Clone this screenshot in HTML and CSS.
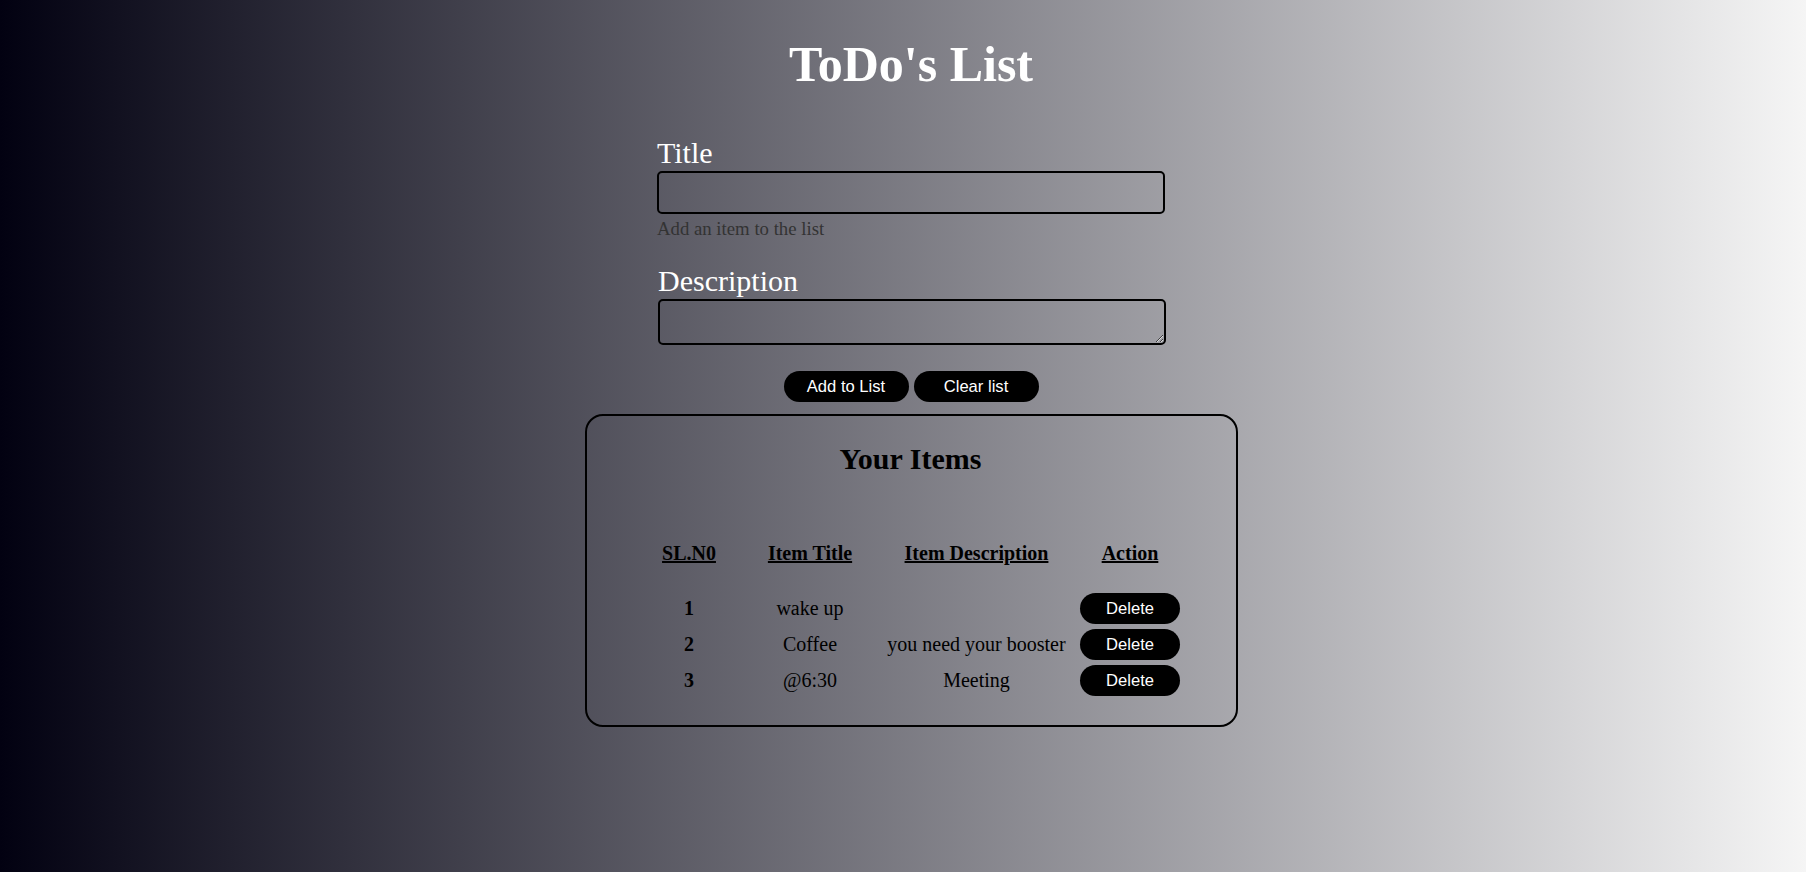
FILE: index.html
```html
<!DOCTYPE html>
<html lang="en">
<head>
<meta charset="utf-8">
<title>ToDo's List</title>
<link rel="stylesheet" href="styles.css">
</head>
<body>
<div class="page">
  <h1 class="app-title">ToDo's List</h1>
  <form class="todo-form">
    <div class="field">
      <label class="field-label" for="title">Title</label>
      <input class="field-input" id="title" type="text">
      <div class="field-help">Add an item to the list</div>
    </div>
    <div class="field field-desc">
      <label class="field-label" for="desc">Description</label>
      <textarea class="field-textarea" id="desc"></textarea>
    </div>
  </form>
  <div class="actions">
    <button class="pill-btn" type="button">Add to List</button>
    <button class="pill-btn" type="button">Clear list</button>
  </div>
  <section class="items-box">
    <h2 class="items-title">Your Items</h2>
    <table class="items-table">
      <colgroup>
        <col class="col-no">
        <col class="col-title">
        <col class="col-desc">
        <col class="col-action">
      </colgroup>
      <thead>
        <tr>
          <th>SL.N0</th>
          <th>Item Title</th>
          <th>Item Description</th>
          <th>Action</th>
        </tr>
      </thead>
      <tbody>
        <tr>
          <th class="row-no">1</th>
          <td>wake up</td>
          <td></td>
          <td><button class="del-btn" type="button">Delete</button></td>
        </tr>
        <tr>
          <th class="row-no">2</th>
          <td>Coffee</td>
          <td>you need your booster</td>
          <td><button class="del-btn" type="button">Delete</button></td>
        </tr>
        <tr>
          <th class="row-no">3</th>
          <td>@6:30</td>
          <td>Meeting</td>
          <td><button class="del-btn" type="button">Delete</button></td>
        </tr>
      </tbody>
    </table>
  </section>
</div>
</body>
</html>
```
FILE: styles.css
```css
html, body {
  margin: 0;
  padding: 0;
  height: 100%;
}

body {
  background: linear-gradient(to right, #020111, #f5f5f5);
  font-family: "Liberation Serif", "Times New Roman", serif;
  color: #000;
}

.page {
  padding: 35px 0 0 16px;
}

.app-title {
  margin: 0;
  font-size: 50px;
  line-height: 58px;
  font-weight: bold;
  color: #fff;
  text-align: center;
}

.todo-form {
  width: 508px;
  margin: 42px auto 0;
}

.field-desc {
  margin-top: 24px;
  padding-left: 1px;
}

.field-label {
  display: block;
  font-size: 30px;
  line-height: 35px;
  color: #fff;
}

.field-input,
.field-textarea {
  display: block;
  box-sizing: border-box;
  width: 508px;
  margin: 1px 0 0;
  padding: 4px 8px;
  background: transparent;
  border: 2px solid #000;
  border-radius: 5px;
  font-family: "Liberation Serif", serif;
  font-size: 18px;
  color: #000;
  outline: none;
}

.field-input {
  height: 43px;
}

.field-textarea {
  height: 46px;
  resize: both;
}

.field-help {
  margin-top: 4px;
  font-size: 18.75px;
  line-height: 21px;
  color: #333;
}

.actions {
  display: flex;
  justify-content: center;
  gap: 5px;
  margin-top: 26px;
}

.pill-btn,
.del-btn {
  box-sizing: border-box;
  height: 31px;
  padding: 1px 0 0;
  border: none;
  border-radius: 16px;
  background: #000;
  color: #fff;
  font-family: "Liberation Sans", Arial, sans-serif;
  font-size: 16.6px;
  cursor: pointer;
}

.pill-btn {
  width: 125px;
}

.del-btn {
  width: 100px;
  display: inline-block;
  vertical-align: middle;
}

.items-box {
  box-sizing: border-box;
  width: 653px;
  margin: 12px auto 0;
  padding: 26px 0 27px 4px;
  border: 2px solid #000;
  border-radius: 18px;
}

.items-title {
  margin: 0 5px 66px 0;
  font-size: 30px;
  line-height: 34px;
  font-weight: bold;
  text-align: center;
}

.items-table {
  table-layout: fixed;
  width: 549px;
  margin: 0 auto;
  border-collapse: collapse;
  border-spacing: 0;
  font-size: 20px;
  line-height: 23px;
}

.col-no { width: 101px; }
.col-title { width: 141px; }
.col-desc { width: 192px; }
.col-action { width: 115px; }

.items-table thead th {
  padding: 0 0 25px;
  font-weight: bold;
  text-decoration: underline;
  text-align: center;
  vertical-align: bottom;
}

.items-table tbody th,
.items-table tbody td {
  height: 36px;
  padding: 0;
  text-align: center;
  vertical-align: middle;
  white-space: nowrap;
}

.row-no {
  font-weight: bold;
}
```
